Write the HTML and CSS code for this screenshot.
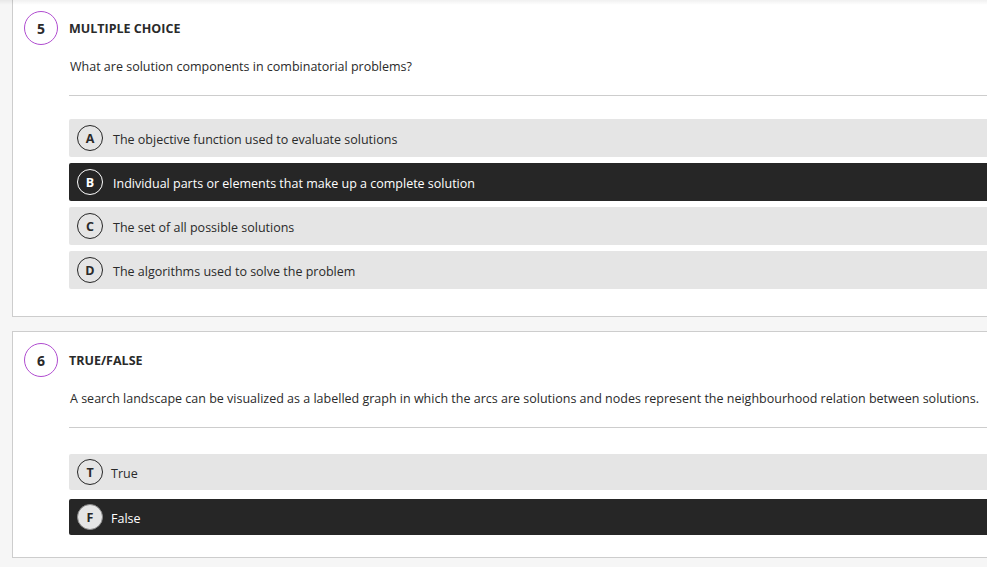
FILE: index.html
```html
<!DOCTYPE html>
<html lang="en">
<head>
<meta charset="utf-8">
<title>Quiz</title>
<link rel="stylesheet" href="styles.css">
</head>
<body>
<div class="page">
  <div class="top-shadow"></div>
  <section class="card card-first">
    <div class="q-head">
      <span class="q-num">5</span>
      <h2 class="q-type">MULTIPLE CHOICE</h2>
    </div>
    <div class="q-body">
      <p class="q-text">What are solution components in combinatorial problems?</p>
      <hr class="q-rule">
      <ul class="opts opts-mc">
        <li class="opt"><span class="badge">A</span><span class="opt-text">The objective function used to evaluate solutions</span></li>
        <li class="opt opt-selected"><span class="badge">B</span><span class="opt-text">Individual parts or elements that make up a complete solution</span></li>
        <li class="opt"><span class="badge">C</span><span class="opt-text">The set of all possible solutions</span></li>
        <li class="opt"><span class="badge">D</span><span class="opt-text">The algorithms used to solve the problem</span></li>
      </ul>
    </div>
  </section>
  <section class="card card-second">
    <div class="q-head">
      <span class="q-num">6</span>
      <h2 class="q-type">TRUE/FALSE</h2>
    </div>
    <div class="q-body">
      <p class="q-text">A search landscape can be visualized as a labelled graph in which the arcs are solutions and nodes represent the neighbourhood relation between solutions.</p>
      <hr class="q-rule">
      <ul class="opts opts-tf">
        <li class="opt"><span class="badge">T</span><span class="opt-text">True</span></li>
        <li class="opt opt-selected opt-tf-selected"><span class="badge">F</span><span class="opt-text">False</span></li>
      </ul>
    </div>
  </section>
</div>
</body>
</html>
```
FILE: styles.css
```css
html, body {
  margin: 0;
  padding: 0;
  background: #f6f6f6;
  overflow: hidden;
}
body {
  font-family: "Open Sans", "Liberation Sans", sans-serif;
  color: #2a2a2a;
}
.page {
  position: relative;
  width: 1030px;
  padding-left: 12px;
}
.top-shadow {
  position: absolute;
  left: 0;
  right: 0;
  top: 0;
  height: 6px;
  background: linear-gradient(to bottom, rgba(0,0,0,0.07), rgba(0,0,0,0));
  z-index: 2;
}
.card {
  background: #fff;
  border: 1px solid #cdcdcd;
  border-right: none;
  padding: 11px 0 27px 11px;
}
.card-first {
  margin-top: -1px;
}
.card-second {
  margin-top: 14px;
  padding-bottom: 22px;
}
.q-head {
  display: flex;
  align-items: center;
  gap: 11px;
  height: 34px;
}
.q-num {
  width: 34px;
  height: 34px;
  box-sizing: border-box;
  border: 1px solid #b04cd0;
  border-radius: 50%;
  display: flex;
  align-items: center;
  justify-content: center;
  font-weight: 700;
  font-size: 14px;
}
.q-type {
  margin: 0;
  font-size: 12.5px;
  font-weight: 700;
}
.q-body {
  margin-left: 45px;
}
.q-text {
  margin: 12px 0 0 1px;
  font-size: 12.5px;
  line-height: 20px;
  white-space: nowrap;
}
.q-rule {
  margin: 18px 0 0;
  border: 0;
  border-top: 1px solid #cdcdcd;
  height: 0;
}
.opts {
  list-style: none;
  margin: 23px 0 0;
  padding: 0;
  display: flex;
  flex-direction: column;
  gap: 6px;
}
.opts-tf {
  margin-top: 26px;
  gap: 9px;
}
.opt {
  height: 38px;
  display: flex;
  align-items: center;
  padding-left: 8px;
  background: #e5e5e5;
  border-radius: 2px;
  font-size: 12.5px;
}
.opt-text {
  padding-top: 2px;
}
.opts-tf .opt {
  height: 36px;
}
.badge {
  width: 26px;
  height: 26px;
  box-sizing: border-box;
  border: 1px solid #262626;
  border-radius: 50%;
  display: flex;
  align-items: center;
  justify-content: center;
  font-weight: 700;
  font-size: 12.5px;
  margin-right: 10px;
  flex: none;
}
.opts-tf .badge {
  margin-right: 8px;
}
.opt-selected {
  background: #262626;
  color: #fff;
}
.opt-selected .badge {
  border-color: #fff;
  color: #fff;
}
.opt-tf-selected .badge {
  background: #e5e5e5;
  color: #262626;
  border-color: #8a8a8a;
}
```
